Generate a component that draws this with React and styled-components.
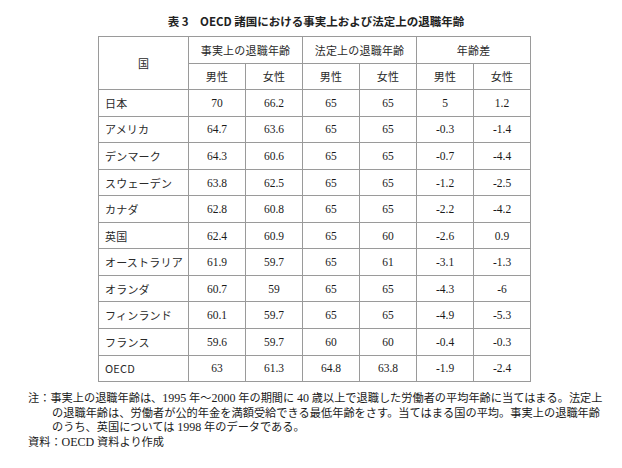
import React from "react";
import styled, { createGlobalStyle } from "styled-components";

const Global = createGlobalStyle`
  html, body { margin: 0; padding: 0; background: #fff; }
  body { width: 622px; height: 468px; overflow: hidden; }
`;

const Page = styled.div`
  padding-top: 14px;
  color: #1a1a1a;
`;

const Title = styled.h1`
  margin: 0 0 8px 10px;
  text-align: center;
  font-family: "Noto Sans CJK JP", sans-serif;
  font-weight: 700;
  font-size: 11.5px;
  line-height: 14px;
  color: #222;
`;

const Table = styled.table`
  margin: 0 0 0 98px;
  width: 432px;
  border-collapse: collapse;
  table-layout: fixed;
`;

const Cell = styled.td`
  border: 1px solid #9a9a9a;
  height: 25.55px;
  padding: 0;
  text-align: ${(p) => (p.$left ? "left" : "center")};
  padding-left: ${(p) => (p.$left ? "6px" : "0")};
  font-family: ${(p) =>
    p.$num ? '"Liberation Serif", serif' : '"Noto Sans CJK JP", sans-serif'};
  font-size: ${(p) => (p.$num ? "11.5px" : "11px")};
  font-weight: 400;
  color: ${(p) => (p.$num ? "#1a1a1a" : "#2a2a2a")};
  line-height: 14px;
  letter-spacing: ${(p) => (p.$num ? "0" : "0.2px")};
  white-space: nowrap;
`;

const Notes = styled.div`
  margin: 9px 22px 0 28px;
  font-family: "Liberation Serif", "Noto Sans CJK JP", serif;
  font-size: 11.2px;
  line-height: 14.5px;
  color: #1a1a1a;
`;

const NoteLine = styled.div`
  padding-left: ${(p) => (p.$indent ? "24px" : "0")};
  text-align: justify;
  text-align-last: ${(p) => (p.$full ? "justify" : "left")};
  white-space: nowrap;
`;

const Digits = styled.span`
  font-size: 12px;
`;

const rows = [
  ["日本", "70", "66.2", "65", "65", "5", "1.2"],
  ["アメリカ", "64.7", "63.6", "65", "65", "-0.3", "-1.4"],
  ["デンマーク", "64.3", "60.6", "65", "65", "-0.7", "-4.4"],
  ["スウェーデン", "63.8", "62.5", "65", "65", "-1.2", "-2.5"],
  ["カナダ", "62.8", "60.8", "65", "65", "-2.2", "-4.2"],
  ["英国", "62.4", "60.9", "65", "60", "-2.6", "0.9"],
  ["オーストラリア", "61.9", "59.7", "65", "61", "-3.1", "-1.3"],
  ["オランダ", "60.7", "59", "65", "65", "-4.3", "-6"],
  ["フィンランド", "60.1", "59.7", "65", "65", "-4.9", "-5.3"],
  ["フランス", "59.6", "59.7", "60", "60", "-0.4", "-0.3"],
  ["OECD", "63", "61.3", "64.8", "63.8", "-1.9", "-2.4"],
];

const groups = ["事実上の退職年齢", "法定上の退職年齢", "年齢差"];

export default function App() {
  return (
    <Page>
      <Global />
      <Title>表 3　OECD 諸国における事実上および法定上の退職年齢</Title>
      <Table>
        <colgroup>
          <col style={{ width: 90 }} />
          {Array.from({ length: 6 }).map((_, i) => (
            <col key={i} style={{ width: 57 }} />
          ))}
        </colgroup>
        <thead>
          <tr>
            <Cell as="th" rowSpan={2}>国</Cell>
            {groups.map((g) => (
              <Cell as="th" key={g} colSpan={2}>{g}</Cell>
            ))}
          </tr>
          <tr>
            {groups.map((g) => (
              <React.Fragment key={g}>
                <Cell as="th">男性</Cell>
                <Cell as="th">女性</Cell>
              </React.Fragment>
            ))}
          </tr>
        </thead>
        <tbody>
          {rows.map(([name, ...vals]) => (
            <tr key={name}>
              <Cell $left>{name}</Cell>
              {vals.map((v, i) => (
                <Cell $num key={i}>{v}</Cell>
              ))}
            </tr>
          ))}
        </tbody>
      </Table>
      <Notes>
        <NoteLine $full>
          注：事実上の退職年齢は、<Digits>1995</Digits> 年〜<Digits>2000</Digits> 年の期間に <Digits>40</Digits> 歳以上で退職した労働者の平均年齢に当てはまる。法定上
        </NoteLine>
        <NoteLine $indent $full>
          の退職年齢は、労働者が公的年金を満額受給できる最低年齢をさす。当てはまる国の平均。事実上の退職年齢
        </NoteLine>
        <NoteLine $indent>のうち、英国については <Digits>1998</Digits> 年のデータである。</NoteLine>
        <NoteLine>資料：<Digits>OECD</Digits> 資料より作成</NoteLine>
      </Notes>
    </Page>
  );
}
